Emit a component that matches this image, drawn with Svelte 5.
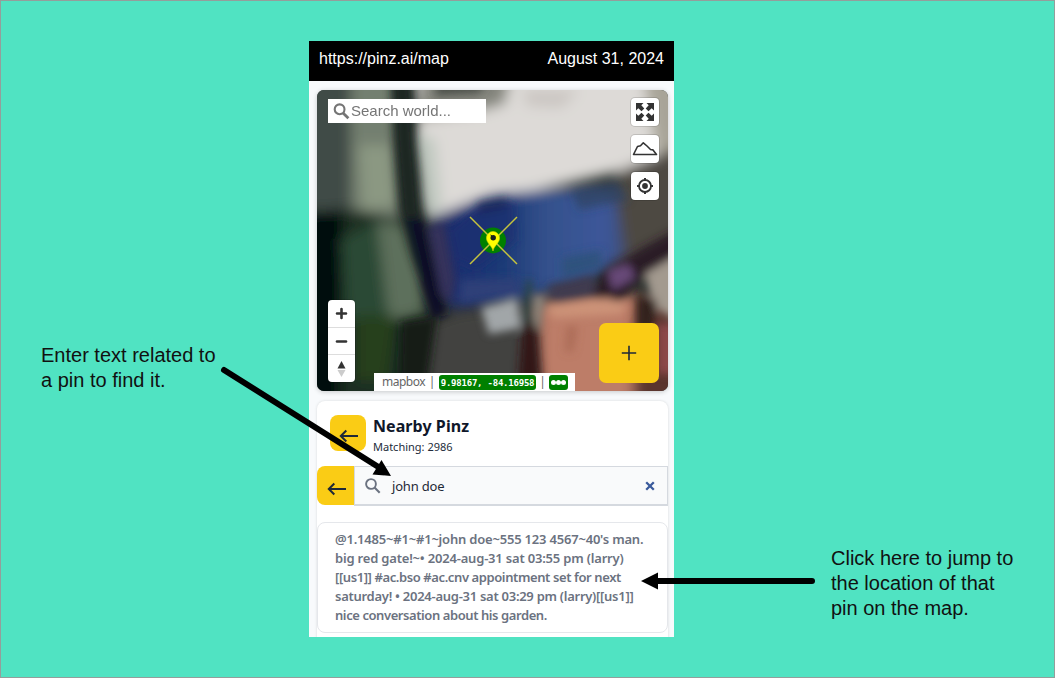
<script>
  const note = [
    { text: "@1.1485~#1~#1~john doe~555 123 4567~40's man.", spacing: -0.2 },
    { text: 'big red gate!~• 2024-aug-31 sat 03:55 pm (larry)', spacing: -0.19 },
    { text: '[[us1]] #ac.bso #ac.cnv appointment set for next', spacing: -0.4 },
    { text: 'saturday! • 2024-aug-31 sat 03:29 pm (larry)[[us1]]', spacing: -0.27 },
    { text: 'nice conversation about his garden.', spacing: -0.42 }
  ];
</script>

{#snippet backArrow()}
  <svg class="back-arrow" width="20" height="16" viewBox="0 0 20 16">
    <path d="M19 8H2M7.3 2.5 1.8 8l5.5 5.5" fill="none" stroke="#1f2937" stroke-width="2" />
  </svg>
{/snippet}

<div class="board">
  <p class="callout left">Enter text related to<br />a pin to find it.</p>

  <main class="phone">
    <header><span>https://pinz.ai/map</span><span>August 31, 2024</span></header>
    <div class="screen">
      <section class="map">
        <svg class="imagery" width="351" height="301" viewBox="0 0 351 301">
          <defs>
            <filter id="soft" x="-20%" y="-20%" width="140%" height="140%"><feGaussianBlur stdDeviation="6.5" /></filter>
            <filter id="fine" x="-20%" y="-20%" width="140%" height="140%"><feGaussianBlur stdDeviation="4.2" /></filter>
            <linearGradient id="roof" x1="0" x2="1">
              <stop offset="0" stop-color="#252c5c" /><stop offset=".15" stop-color="#1b2f70" /><stop offset=".4" stop-color="#1f3c78" />
              <stop offset=".6" stop-color="#34518c" /><stop offset=".9" stop-color="#3d579a" /><stop offset="1" stop-color="#3f4f78" />
            </linearGradient>
          </defs>
          <rect width="351" height="301" fill="#2a302d" />
          <g filter="url(#soft)">
            <path d="M-20-20H40V125H-20Z" fill="#414c46" />
            <path d="M34-20H78L80 60 84 135 34 135Z" fill="#737f70" />
            <path d="M42 55H74L80 115 46 120Z" fill="#8b9882" />
            <path d="M-20 122 30 118 90 130 115 230 105 330H-20Z" fill="#1b2d20" />
            <path d="M-20 122H26L22 330H-20Z" fill="#06100b" />
            <path d="M24 150 60 132 78 190 75 235 30 230Z" fill="#2b4a34" />
            <path d="M60 132 86 135 106 185 106 222 72 232Z" fill="#5d6f5c" />
            <path d="M40 225H78L70 290 40 290Z" fill="#26401d" />
            <path d="M96-20H380V70L300 82 220 100 165 108 118 132 104 110Z" fill="#dddad7" />
            <path d="M96 40 118 50 125 118 108 130Z" fill="#bfc8bf" />
            <path d="M105-20H195L188 14 160 22 100 30Z" fill="#84857d" />
            <path d="M205 0H262L245 18 210 16Z" fill="#cbc6c2" />
            <path d="M325-20H380V60L340 66Z" fill="#a8a498" />
            <path d="M300 82 380 50V190L300 178Z" fill="#4e4843" />
            <path d="M112 128 175 104 240 99 298 100 308 165 270 192 210 208 128 218Z" fill="url(#roof)" />
            <path d="M104 235 140 222 222 212 225 320H96Z" fill="#42433f" />
            <path d="M222 214 270 206 322 204 326 320H224Z" fill="#bd7d67" />
            <path d="M318 210 380 200V320H316Z" fill="#5a342f" />
          </g>
          <g filter="url(#fine)">
            <path d="M75-10 94-10 98 60 103 120 118 165 130 225 114 226 95 165 84 120 78 50Z" fill="#1a2620" />
            <path d="M90 128 106 130 118 180 128 226 114 226Z" fill="#090f27" />
            <path d="M111 138 127 134 138 190 134 212 124 205Z" fill="#34325b" />
            <path d="M132 140 162 116 198 112 200 150 160 180 138 170Z" fill="#182c70" opacity=".7" />
            <path d="M160 112 190 106 190 118 162 124Z" fill="#162352" opacity=".6" />
            <path d="M255 100 300 92 312 110 262 120Z" fill="#2d4561" opacity=".7" />
            <path d="M245 168 285 160 284 178 245 188Z" fill="#2d5178" opacity=".8" />
            <path d="M144 190 200 188 205 204 142 214Z" fill="#2e3f78" />
            <path d="M164 218 200 208 204 238 172 244Z" fill="#a1a6a8" />
            <path d="M206 228 219 228 226 310H200Z" fill="#331719" />
            <path d="M217 205 228 205 222 240 217 236Z" fill="#8f8a80" />
            <path d="M209 190 215 190 212 234 206 234Z" fill="#2b4540" />
            <path d="M230 196 275 185 280 205 238 212Z" fill="#3f3a50" />
            <path d="M362 138V172L322 190 300 214 276 206 286 182 325 158Z" fill="#2b1d25" />
            <path d="M290 180 312 174 318 188 296 200Z" fill="#684a78" />
            <path d="M328 184 362 164V232L336 216Z" fill="#a39a8f" />
            <path d="M320 206 340 210 336 240H320Z" fill="#33211f" />
            <path d="M340 234H362V284H340Z" fill="#8b4848" />
            <path d="M228 216 290 208 310 214 305 224 236 228Z" fill="#cc9378" />
            <path d="M250 236 260 236 256 262 248 262Z" fill="#a0614b" opacity=".6" />
            <path d="M84 232 120 226 108 310H82Z" fill="#141d17" />
            <path d="M120-8 170-8 162 3 118 6Z" fill="#4c4f48" />
          </g>
        </svg>

        <div class="map-top">
          <div class="world">
            <svg width="17" height="17" viewBox="0 0 17 17">
              <circle cx="6.6" cy="6.3" r="4.9" fill="none" stroke="#757575" stroke-width="2.1" />
              <path d="m10 10 5.4 5.3" stroke="#757575" stroke-width="2.8" />
            </svg>
            <span>Search world...</span>
          </div>
          <div class="tools">
            <button aria-label="Fullscreen">
              <svg width="20" height="20" viewBox="0 0 20 20">
                <path d="M1 1h7.500L6.300 3.300l3 3.200-2.800 2.800-3.200-3L1 8.500zM19 1v7.500l-2.300-2.200-3.200 3-2.800-2.800 3-3.200L11.500 1zM1 19v-7.500l2.300 2.200 3.200-3 2.800 2.800-3 3.200L8.500 19zM19 19h-7.500l2.200-2.300-3-3.200 2.800-2.800 3.200 3L19 11.500z" fill="#333" />
              </svg>
            </button>
            <button aria-label="Terrain">
              <svg width="26" height="18" viewBox="0 0 26 18">
                <path d="M1.500 14.500 5.500 6.500 8.500 5.800 11.300 2.800 15 6 18.500 9.500l2.500.4 3.500 4.600z" fill="none" stroke="#333" stroke-width="1.6" stroke-linejoin="round" />
              </svg>
            </button>
            <button aria-label="Locate">
              <svg width="20" height="20" viewBox="0 0 20 20">
                <circle cx="10" cy="10" r="6" fill="none" stroke="#333" stroke-width="1.8" />
                <circle cx="10" cy="10" r="2.9" fill="#333" />
                <path d="M10 2v3m0 10v3M2 10h3m10 0h3" stroke="#333" stroke-width="2" />
              </svg>
            </button>
          </div>
        </div>

        <svg class="pin" width="50" height="50" viewBox="0 0 50 50">
          <circle cx="25" cy="25.4" r="13" fill="#008000" />
          <path d="m2 2 47 47M49 2 2 49" stroke="#c5c33e" stroke-width="1.5" />
          <path d="M25 36c-.8-5.500-6.500-7.500-6.500-13a6.500 6.500 0 0 1 13 0c0 5.500-5.700 7.500-6.500 13z" fill="#ff0" stroke="#d8d800" stroke-width=".6" />
          <circle cx="25.200" cy="22.700" r="2.700" fill="#17211d" />
          <path d="m22.500 20 1.500 1" stroke="#17211d" />
        </svg>

        <div class="map-bottom">
          <div class="zoomer">
            <button aria-label="Zoom in"><svg width="13" height="13" viewBox="0 0 13 13"><path d="M6.500 2v9M2 6.500h9" stroke="#333" stroke-width="2.600" stroke-linecap="round" /></svg></button>
            <button aria-label="Zoom out"><svg width="13" height="13" viewBox="0 0 13 13"><path d="M2 6.500h9" stroke="#333" stroke-width="2.600" stroke-linecap="round" /></svg></button>
            <button aria-label="Compass"><svg width="9" height="18" viewBox="0 0 9 18"><path d="M.5 8.500 4.500 1l4 7.500z" fill="#333" /><path d="m.5 10 4 7 4-7z" fill="#ccc" /></svg></button>
          </div>
          <div class="attribution">
            <span class="brand">mapbox</span><span class="bar">|</span><span class="coords">9.98167, -84.16958</span><span class="bar second">|</span>
            <span class="dots"><i></i><i></i><i></i></span>
          </div>
          <button class="add" aria-label="Add pin"><svg width="16" height="16" viewBox="0 0 16 16"><path d="M8 .8v14.400M.8 8h14.400" stroke="#1f2937" stroke-width="1.600" /></svg></button>
        </div>
      </section>

      <section class="list">
        <div class="heading">
          <button class="back" aria-label="Back">{@render backArrow()}</button>
          <div>
            <h1>Nearby Pinz</h1>
            <p class="count">Matching: 2986</p>
          </div>
        </div>
        <div class="search">
          <button class="back flat" aria-label="Back">{@render backArrow()}</button>
          <div class="field">
            <svg width="18" height="18" viewBox="0 0 18 18">
              <circle cx="7" cy="7" r="4.900" fill="none" stroke="#6b7280" stroke-width="1.900" />
              <path d="m10.500 10.500 5.200 5.200" stroke="#6b7280" stroke-width="2.100" />
            </svg>
            <span class="query">john doe</span>
            <svg class="clear" width="10" height="10" viewBox="0 0 10 10"><path d="m1.200 1.200 7.600 7.600M8.800 1.200 1.200 8.800" stroke="#3a5a9c" stroke-width="2.300" /></svg>
          </div>
        </div>
        <article>
          {#each note as line}
            <div style:letter-spacing="{line.spacing}px">{line.text}</div>
          {/each}
        </article>
      </section>
    </div>
  </main>

  <p class="callout right">Click here to jump to<br />the location of that<br />pin on the map.</p>

  <svg class="pointers" width="1055" height="678" viewBox="0 0 1055 678">
    <g stroke="#000" stroke-width="6" stroke-linecap="round">
      <path d="M224 370 380 468" /><path d="M812 581H655" />
    </g>
    <path d="M391 476 381.500 460 372.500 474.500zM641 581l17-8.500v17z" />
  </svg>
</div>

<style>
  :global(body) { margin: 0; }
  * { box-sizing: border-box; }
  p, h1 { margin: 0; }
  button { display: grid; place-items: center; padding: 0; border: 0; margin: 0; }
  svg { display: block; flex: none; }
  .board { position: relative; width: 1055px; height: 678px; display: grid; grid-template-columns: 268px 365px 1fr; padding: 40px 0 0 40px; background: #50e3c2; border: 1px solid #949e9b; overflow: hidden; }
  .pointers { position: absolute; left: -1px; top: -1px; }
  .callout { font: 20px/25px "Liberation Sans", Arial, sans-serif; color: #111; white-space: nowrap; }
  .left { padding-top: 302px; }
  .right { padding: 505px 0 0 157px; }
  .phone { width: 365px; height: 596px; overflow: hidden; background: #f8fafc; }
  header { height: 40px; background: #000; color: #fff; display: flex; justify-content: space-between; padding: 8px 10px; font: 16px/20px "Liberation Sans", Arial, sans-serif; }
  .screen { padding: 9px 6px 0 8px; }
  .map { position: relative; width: 351px; height: 301px; border-radius: 7px; overflow: hidden; display: flex; flex-direction: column; justify-content: space-between; box-shadow: 0 1px 5px #0003; }
  .imagery { position: absolute; inset: 0; }
  .map-top { position: relative; display: flex; justify-content: space-between; align-items: flex-start; padding: 9px 9px 0 11px; }
  .world { width: 158px; height: 24px; background: #fff; display: flex; align-items: center; padding: 0 0 0 5px; gap: 1px; font: 15px/24px "Liberation Sans", Arial, sans-serif; color: #757575; }
  .tools { display: grid; gap: 9px; margin-top: -1px; }
  .tools button { width: 28px; height: 28px; background: #fff; border-radius: 4px; box-shadow: 0 0 0 1px #0002; }
  .pin { position: absolute; left: 151px; top: 125px; }
  .map-bottom { position: relative; display: flex; align-items: flex-end; }
  .zoomer { width: 27px; height: 82px; margin: 0 19px 9px 11px; background: #fff; border-radius: 4px; display: grid; grid-template-rows: 27px 27px 28px; box-shadow: 0 0 0 1px #0002; }
  .zoomer button { background: none; }
  .zoomer button + button { border-top: 1px solid #ddd; }
  .attribution { width: 201px; height: 18px; background: #fff; display: flex; align-items: center; padding-left: 8px; font: 12px/18px "Noto Sans", sans-serif; color: #666; }
  .brand { width: 43px; letter-spacing: -0.5px; }
  .bar { width: 14px; text-align: center; }
  .second { width: 13px; }
  .coords { width: 97px; height: 15px; background: #008000; color: #fff; border-radius: 3px; font: bold 9px/16px "DejaVu Sans Mono", monospace; letter-spacing: -0.22px; text-align: center; white-space: pre; }
  .dots { width: 19px; height: 15px; background: #008000; border-radius: 3px; display: flex; align-items: center; justify-content: center; }
  .dots i { width: 5px; height: 5px; border-radius: 50%; background: #fff; }
  .add { width: 60px; height: 60px; margin: 0 9px 8px auto; border-radius: 7px; background: #facc15; }
  .list { width: 351px; height: 250px; margin-top: 10px; background: #fff; border-radius: 8px 8px 0 0; box-shadow: 0 0 3px #0002; }
  .heading { height: 65px; padding: 14px 0 0 13px; display: flex; align-items: flex-start; gap: 7px; }
  .back { width: 36px; height: 36px; border-radius: 8px; background: #facc15; }
  .back-arrow { transform: translate(1px, 3px); }
  h1 { font: bold 16px/22px "Noto Sans", sans-serif; color: #0f172a; letter-spacing: 0.07px; }
  .count { font: 11px/20px "Noto Sans", sans-serif; color: #222b3a; }
  .search { height: 40px; display: flex; }
  .flat { width: 37px; height: 39px; border-radius: 8px 0 0 8px; }
  .field { flex: 1; height: 40px; background: #f9fafb; border: 1px solid #d5d9df; border-width: 1px 1px 2px; display: flex; align-items: center; padding: 0 12px 0 9px; }
  .query { padding-left: 10px; font: 13px/20px "Noto Sans", sans-serif; letter-spacing: -0.2px; color: #1f2937; }
  .clear { margin-left: auto; }
  article { margin-top: 16px; height: 111px; border: 1px solid #e5e7eb; border-radius: 8px; padding: 7px 0 0 17px; font: 600 13px/19px "Noto Sans", sans-serif; color: #6b7280; white-space: nowrap; }
  article div { width: max-content; }
</style>
